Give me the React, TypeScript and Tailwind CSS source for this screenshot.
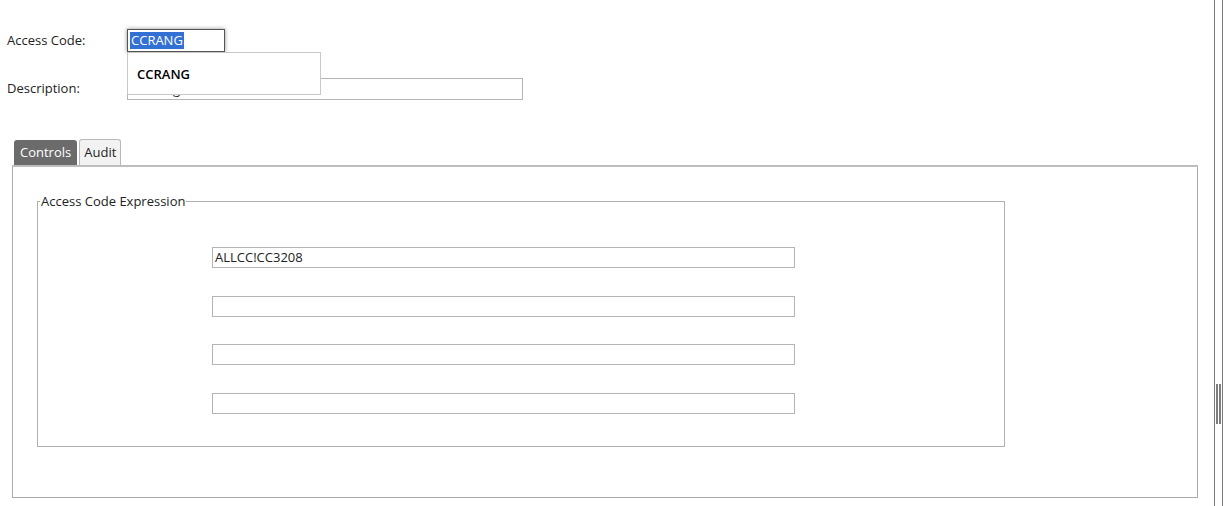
import React from "react";

export default function App() {
  return (
    <div
      className="relative flex w-[1224px] h-[506px] bg-white text-[13px] text-[#222] overflow-hidden"
      style={{ fontFamily: '"Open Sans", "Noto Sans", sans-serif' }}
    >
      <div className="flex-1 flex flex-col">
        {/* Access code row */}
        <div className="flex items-center pl-[7px] mt-[29px] h-[23px]">
          <div className="w-[120px] leading-none">Access Code:</div>
          <div className="relative">
            <div className="w-[98px] h-[23px] border border-[#555] shadow-[0_0_4px_rgba(0,0,0,0.45)] flex items-center pl-[2px] bg-white">
              <span className="bg-[#3370d4] text-white leading-[17px] px-[1px]">CCRANG</span>
            </div>
            <div className="absolute left-0 top-[23px] z-10 w-[194px] h-[43px] border border-[#c8c8c8] bg-white flex items-center pl-[9px] pt-[2px] font-semibold text-[13px] text-black">
              CCRANG
            </div>
          </div>
        </div>
        {/* Description row */}
        <div className="flex items-center pl-[7px] mt-[26px] h-[22px]">
          <div className="w-[120px] leading-none -mt-[1px]">Description:</div>
          <div className="w-[396px] h-[22px] border border-[#b4b4b4] bg-white flex items-center pl-[2px] leading-none">
            CC Range
          </div>
        </div>

        {/* Tabs */}
        <div className="ml-[12px] mt-[39px] w-[1186px]">
          <div className="flex items-end pl-[2px] gap-[2px] h-[26px]">
            <div className="h-[25px] px-[6px] bg-[#6b6b6b] text-white rounded-t-[3px] flex items-center leading-none">
              Controls
            </div>
            <div className="h-[26px] px-[4px] bg-[#f2f2f2] border border-b-0 border-[#b8b8b8] rounded-t-[3px] flex items-center leading-none text-[#222]">
              Audit
            </div>
          </div>
          <div className="h-[2px] bg-[#bdbdbd]" />
          <div className="h-[331px] border border-t-0 border-[#ababab] pt-[26px] pl-[24px]">
            <fieldset className="w-[968px] h-[254px] border border-[#b0b0b0] m-0 p-0">
              <legend className="ml-[2px] px-[1px] leading-[16px] text-[#222]">
                Access Code Expression
              </legend>
              <div className="flex flex-col pl-[174px] pt-[38px] gap-[27.67px]">
                <div className="w-[583px] h-[21px] border border-[#b4b4b4] flex items-center pl-[2px] leading-none">
                  ALLCC!CC3208
                </div>
                <div className="w-[583px] h-[21px] border border-[#b4b4b4]" />
                <div className="w-[583px] h-[21px] border border-[#b4b4b4]" />
                <div className="w-[583px] h-[21px] border border-[#b4b4b4]" />
              </div>
            </fieldset>
          </div>
        </div>
      </div>

      {/* Scrollbar strip */}
      <div className="w-[9px] h-full border-l border-r border-[#7a7a7a] mr-[1px] flex flex-col items-center">
        <div className="mt-[384px] h-[40px] w-[5px] flex justify-between">
          <div className="w-[2px] h-full bg-[#7d7d7d]" />
          <div className="w-[2px] h-full bg-[#7d7d7d]" />
        </div>
      </div>
    </div>
  );
}
